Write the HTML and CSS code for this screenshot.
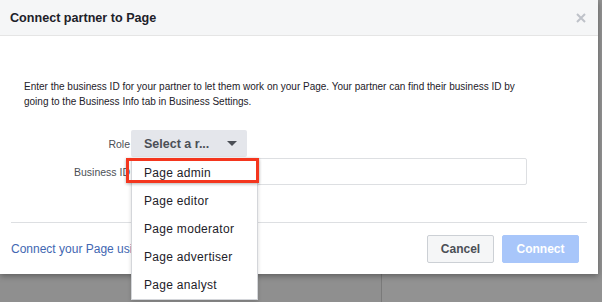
FILE: index.html
```html
<!DOCTYPE html>
<html lang="en">
<head>
  <meta charset="UTF-8" />
  <title>Connect partner to Page</title>
  <link rel="stylesheet" href="styles.css">
</head>
<body>
  <div class="dialog">
    <div class="dialog-header">
      <h1 class="dialog-title">Connect partner to Page</h1>
      <span class="close-btn">
        <svg width="10" height="10" viewBox="0 0 10 10">
          <path d="M1 1 L9 9 M9 1 L1 9" stroke="#bec2c9" stroke-width="2" />
        </svg>
      </span>
    </div>

    <div class="dialog-body">
      <p class="intro">Enter the business ID for your partner to let them work on your Page. Your partner can find their business ID by going to the Business Info tab in Business Settings.</p>

      <div class="form-grid">
        <label class="form-label">Role</label>
        <div class="role-field">
          <button class="select-btn">
            <span>Select a r...</span>
            <span class="caret"></span>
          </button>
          <ul class="role-menu">
            <li>Page admin</li>
            <li>Page editor</li>
            <li>Page moderator</li>
            <li>Page advertiser</li>
            <li>Page analyst</li>
          </ul>
          <div class="highlight"></div>
        </div>

        <label class="form-label">Business ID</label>
        <input class="text-input" type="text" />
      </div>
    </div>

    <div class="dialog-footer">
      <a class="footer-link" href="#">Connect your Page using a different method</a>
      <div class="footer-actions">
        <button class="btn btn-cancel">Cancel</button>
        <button class="btn btn-connect">Connect</button>
      </div>
    </div>
  </div>
</body>
</html>
```

FILE: styles.css
```css
* {
  box-sizing: border-box;
  margin: 0;
  padding: 0;
}

body {
  width: 602px;
  height: 302px;
  overflow: hidden;
  font-family: 'Liberation Sans', Arial, sans-serif;
  color: #1d2129;
  background: linear-gradient(to right, #8f8f8f 0, #8f8f8f 381px, #7a7a7a 381px, #7a7a7a 382px, #929292 382px);
}

.dialog {
  width: 598px;
  height: 274px;
  background: #fff;
  box-shadow: 0 2px 6px rgba(0, 0, 0, 0.35);
  display: flex;
  flex-direction: column;
}

.dialog-header {
  height: 36px;
  background: #f5f6f7;
  border-bottom: 1px solid #e5e5e5;
  display: flex;
  align-items: center;
  justify-content: space-between;
  padding: 0 12px 0 10px;
}

.dialog-title {
  font-size: 12.6px;
  font-weight: bold;
  color: #1d2129;
}

.close-btn {
  display: flex;
}

.dialog-body {
  flex: 1;
  padding: 43px 24px 0;
}

.intro {
  max-width: 500px;
  font-size: 10px;
  line-height: 15px;
  color: #1d2129;
  margin-bottom: 21px;
}

.form-grid {
  display: grid;
  grid-template-columns: 106px auto;
  column-gap: 1px;
  row-gap: 1px;
  align-items: center;
}

.form-label {
  text-align: right;
  font-size: 10.5px;
  color: #4b4f56;
}

.role-field {
  position: relative;
  z-index: 2;
}

.select-btn {
  width: 116px;
  height: 27px;
  border: none;
  border-radius: 2px;
  background: #e4e6eb;
  color: #4b4f56;
  font-family: inherit;
  font-size: 12.5px;
  font-weight: bold;
  display: flex;
  align-items: center;
  justify-content: space-between;
  padding: 0 10px 0 13px;
}

.caret {
  width: 0;
  height: 0;
  border-left: 5px solid transparent;
  border-right: 5px solid transparent;
  border-top: 5px solid #4b4f56;
}

.role-menu {
  position: absolute;
  top: 28px;
  left: 0;
  width: 127px;
  list-style: none;
  background: #fff;
  border: 1px solid #d4d6da;
  box-shadow: 0 2px 4px rgba(0, 0, 0, 0.15);
}

.role-menu li {
  height: 28px;
  line-height: 28px;
  padding-left: 12px;
  font-size: 12px;
  letter-spacing: 0.3px;
  color: #1d2129;
}

.highlight {
  position: absolute;
  top: 28px;
  left: -5px;
  width: 133px;
  height: 25px;
  border: 3px solid #f4361e;
  box-shadow: 0 1px 3px rgba(0, 0, 0, 0.3);
}

.text-input {
  width: 396px;
  height: 27px;
  border: 1px solid #dddfe2;
  border-radius: 2px;
}

.dialog-footer {
  margin: 0 11px;
  border-top: 1px solid #dddfe2;
  padding: 12px 8px 11px 0;
  display: flex;
  align-items: center;
  justify-content: space-between;
}

.footer-link {
  max-width: 120px;
  overflow: hidden;
  white-space: nowrap;
  font-size: 12px;
  color: #4267b2;
  text-decoration: none;
}

.footer-actions {
  display: flex;
  gap: 8px;
}

.btn {
  height: 28px;
  border-radius: 2px;
  font-family: inherit;
  font-size: 12px;
  font-weight: bold;
}

.btn-cancel {
  width: 67px;
  background: #f5f6f7;
  border: 1px solid #ccd0d5;
  color: #4b4f56;
}

.btn-connect {
  width: 77px;
  background: #a8c6fa;
  border: 1px solid #a8c6fa;
  color: #fff;
}
```
